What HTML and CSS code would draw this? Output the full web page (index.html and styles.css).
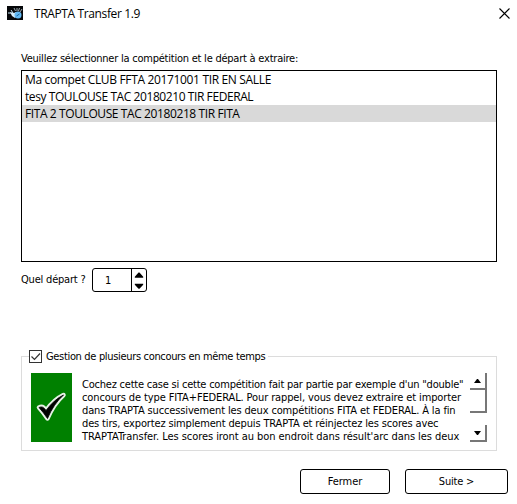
FILE: index.html
```
<!DOCTYPE html>
<html lang="fr">
<head>
<meta charset="utf-8">
<title>TRAPTA Transfer 1.9</title>
<link rel="stylesheet" href="styles.css">
</head>
<body>
<header class="titlebar">
  <svg class="app-icon" width="16" height="14" viewBox="0 0 16 14"><rect width="16" height="14" fill="#050709"/><path d="M7 2l1.500 3M10 2l0 3M12.500 2l-1 3M15 3l-2 3" stroke="#c5d5e0" stroke-width=".8" fill="none"/><path d="M1 7h3M4 4l2 3" stroke="#c5e5f5"/><path d="M3 6l4 1 2-1 1 2-2 4-3-2z" fill="#d5edfb"/><circle cx="11" cy="9" r="3.5" fill="#62b9f4"/><path d="M9.500 10l3-2" stroke="#16679d"/></svg>
  <h1><span class="t-title">TRAPTA Transfer 1.9</span></h1>
  <svg class="close" width="11" height="11" viewBox="0 0 11 11"><path d="M.5 .5l10 10M10.500 .5l-10 10" stroke="#000" stroke-width="1.1"/></svg>
</header>
<main>
  <p class="prompt"><span class="t-prompt">Veuillez sélectionner la compétition et le départ à extraire:</span></p>
  <ul class="list">
    <li><span class="t-row1">Ma compet CLUB FFTA 20171001 TIR EN SALLE</span></li>
    <li><span class="t-row2">tesy TOULOUSE TAC 20180210 TIR FEDERAL</span></li>
    <li class="selected"><span class="t-row3">FITA 2 TOULOUSE TAC 20180218 TIR FITA</span></li>
  </ul>
  <div class="start">
    <span class="start-label"><span class="t-start">Quel départ ?</span></span>
    <div class="spin"><span class="value">1</span>
      <svg width="15" height="22" viewBox="0 0 15 22"><path d="M3 8.500v-1l4-4.500h1l4 4.500v1zM3 15v1l4 4.500h1l4-4.500v-1z"/></svg>
    </div>
  </div>
  <fieldset>
    <legend><svg width="13" height="13" viewBox="0 0 13 13"><rect x=".5" y=".5" width="12" height="12" fill="#fff" stroke="#333"/><path d="M2.500 6.500l3 3 5.500-6" fill="none" stroke="#333" stroke-width="1.200"/></svg><span class="t-legend">Gestion de plusieurs concours en même temps</span></legend>
    <div class="details">
      <svg class="tick" width="41" height="69" viewBox="0 0 41 69"><rect width="41" height="69" fill="#008000"/><path class="halo" d="M8 34.500q4-2 7 3 8-11 17.500-15.500-10 9-16 23.500-4-6-8.500-11z"/><path d="M8 34.500q4-2 7 3 8-11 17.500-15.500-10 9-16 23.500-4-6-8.500-11z" stroke="#000" stroke-width=".8"/></svg>
      <div class="text">
        <div><span class="t-p1">Cochez cette case si cette compétition fait par partie par exemple d'un "double"</span></div>
        <div><span class="t-p2">concours de type FITA+FEDERAL. Pour rappel, vous devez extraire et importer</span></div>
        <div><span class="t-p3">dans TRAPTA successivement les deux compétitions FITA et FEDERAL. À la fin</span></div>
        <div><span class="t-p4">des tirs, exportez simplement depuis TRAPTA et réinjectez les scores avec</span></div>
        <div><span class="t-p5">TRAPTATransfer. Les scores iront au bon endroit dans résult'arc dans les deux</span></div>
      </div>
      <div class="scroll">
        <span class="key"><svg width="7" height="4" viewBox="0 0 7 4"><path d="M0 4l3-4h1l3 4z"/></svg></span>
        <span class="thumb"></span>
        <span class="key down"><svg width="7" height="4" viewBox="0 0 7 4"><path d="M0 0h7l-3 4h-1z"/></svg></span>
      </div>
    </div>
  </fieldset>
  <footer><button class="close-btn"><span class="t-close">Fermer</span></button><button class="next-btn"><span class="t-next">Suite &gt;</span></button></footer>
</main>
</body>
</html>
```
FILE: styles.css
```
* { box-sizing: border-box; }
body { margin: 0; width: 517px; height: 504px; overflow: hidden; background: #fff; color: #000; font: 11px/13px "DejaVu Sans Condensed", "DejaVu Sans", sans-serif; font-stretch: condensed; }
span { white-space: nowrap; }
.titlebar { height: 50px; display: flex; align-items: flex-start; padding: 6px 7px 0 7px; }
.app-icon { display: block; }
.titlebar h1 { margin: 0 0 0 11px; flex: 1; font: 12px/16px "Open Sans", "Noto Sans", sans-serif; }
.close { display: block; margin-top: 2px; }
main { padding: 0 20px 0 21px; }
.prompt { margin: 0; height: 20px; padding-top: 2px; }
.list { margin: 0; padding: 0; list-style: none; border: 1px solid #000; height: 192px; font: 12px/17px "Open Sans", "Noto Sans", sans-serif; }
.list li { height: 17px; padding-left: 3px; }
.list .selected { background: #d9d9d9; }
.start { display: flex; height: 24px; margin-top: 6px; line-height: 24px; }
.start-label { width: 71px; }
.spin { width: 55px; display: flex; border: 1px solid #000; border-radius: 3px; line-height: 24px; }
.value { width: 38px; padding-left: 12px; }
.spin svg { display: block; border-left: 1px solid #000; }
fieldset { margin: 58px 0 0; padding: 0 0 0 9px; border: 1px solid #dcdcdc; min-width: 0; height: 101px; }
legend { display: flex; align-items: center; height: 13px; padding: 0 3px 0 0; margin-left: -2px; gap: 4px; }
.details { display: flex; height: 69px; margin-top: 10px; }
.tick { flex: none; display: block; }
.halo { stroke: #e6f2e6; stroke-width: 4.5px; stroke-linejoin: round; }
.text { width: 398px; padding: 5px 0 0 10px; overflow: hidden; }
.text div { height: 13px; }
.scroll { width: 17px; display: flex; flex-direction: column; flex: none; }
.key { height: 17px; display: flex; align-items: center; justify-content: center; border: solid #777; border-width: 0 2px 2px 0; }
.key svg { display: block; }
.thumb { height: 23px; border: solid #777; border-width: 0 2px 2px 0; }
.down { margin-top: auto; }
footer { display: flex; gap: 15px; margin: 18px 0 0 279px; }
button { height: 25px; padding: 0; background: #fff; border: 1px solid #000; border-radius: 3px; color: #000; font: inherit; flex: none; }
.close-btn { width: 90px; }
.next-btn { width: 103px; }
.t-title { letter-spacing: -.37px; }
.t-prompt { letter-spacing: -.23px; }
.t-row1 { letter-spacing: -.34px; }
.t-row2 { letter-spacing: -.42px; }
.t-row3 { letter-spacing: -.4px; }
.t-start { letter-spacing: -.2px; }
.t-legend { letter-spacing: -.33px; }
.t-p1 { letter-spacing: -.22px; }
.t-p2 { letter-spacing: -.12px; }
.t-p3 { letter-spacing: -.14px; }
.t-p4 { letter-spacing: -.15px; }
.t-p5 { letter-spacing: -.06px; }
.t-close { letter-spacing: -.1px; }
.t-next { letter-spacing: -.2px; }
```
